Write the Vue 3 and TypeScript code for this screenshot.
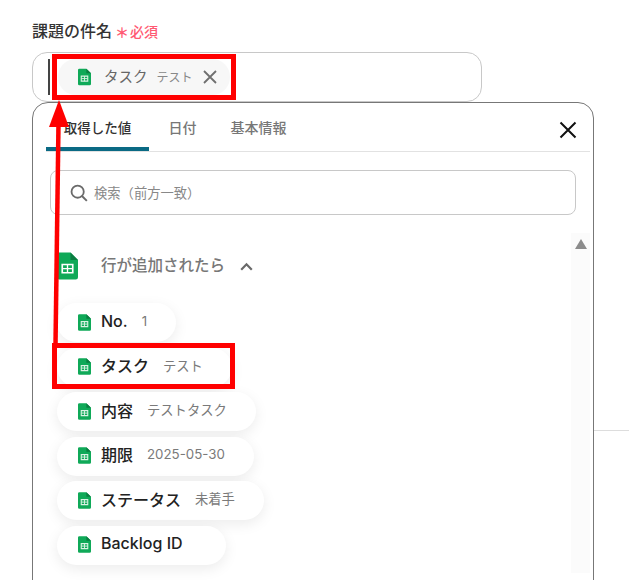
<script setup lang="ts">
interface Pill { name: string; value: string }
const pills: Pill[] = [
  { name: 'No.', value: '1' },
  { name: 'タスク', value: 'テスト' },
  { name: '内容', value: 'テストタスク' },
  { name: '期限', value: '2025-05-30' },
  { name: 'ステータス', value: '未着手' },
  { name: 'Backlog ID', value: '' },
]
const tabs = ['取得した値', '日付', '基本情報']
</script>

<template>
  <div class="page">
    <div class="rule"></div>
    <div class="label-row">
      <span class="label">課題の件名</span>
      <span class="req"><span class="star">＊</span>必須</span>
    </div>
    <div class="input">
      <span class="caret"></span>
      <div class="chip">
        <svg class="sheet" width="13" height="18" viewBox="0 0 14 18"><path d="M1.500 0H9l5 5v11.500a1.500 1.500 0 0 1-1.500 1.500h-11A1.500 1.500 0 0 1 0 16.500v-15A1.500 1.500 0 0 1 1.500 0z" fill="#0fa958"/><path d="M9 0l5 5H9z" fill="#0b7d41"/><path d="M3.500 8h7v5.500h-7z" fill="none" stroke="#d9f2e3" stroke-width="1.200"/><path d="M3.500 10.700h7M7 8v5.500" stroke="#d9f2e3" stroke-width="1"/></svg>
        <span class="chip-name">タスク</span>
        <span class="chip-value">テスト</span>
        <svg class="chip-x" width="14" height="14" viewBox="0 0 14 14"><path d="M1 1l12 12M13 1L1 13" stroke="#6f6f6f" stroke-width="1.800"/></svg>
      </div>
    </div>
    <div class="panel">
      <div class="tabs">
        <span v-for="(t, i) in tabs" :key="t" class="tab" :class="{ active: i === 0 }">{{ t }}</span>
        <svg class="close" width="18" height="18" viewBox="0 0 18 18"><path d="M1.500 1.500l15 15M16.500 1.500l-15 15" stroke="#111" stroke-width="2"/></svg>
      </div>
      <div class="search">
        <svg width="18" height="18" viewBox="0 0 20 20"><circle cx="8.500" cy="8.500" r="6.800" fill="none" stroke="#6a6a6a" stroke-width="2"/><path d="M13.300 13.300L18.700 18.700" stroke="#6a6a6a" stroke-width="2.200"/></svg>
        <span>検索（前方一致）</span>
      </div>
      <div class="scroll">
        <div class="scrollbar"><span class="thumb"></span></div>
        <div class="group">
          <svg class="sheet-lg" width="21" height="28" viewBox="0 0 14 18"><path d="M1.500 0H9l5 5v11.500a1.500 1.500 0 0 1-1.500 1.500h-11A1.500 1.500 0 0 1 0 16.500v-15A1.500 1.500 0 0 1 1.500 0z" fill="#0fa958"/><path d="M9 0l5 5H9z" fill="#0b7d41"/><path d="M3.500 8h7v5.500h-7z" fill="none" stroke="#fff" stroke-width="1.100"/><path d="M3.500 10.700h7M7 8v5.500" stroke="#fff" stroke-width=".9"/></svg>
          <span class="group-title">行が追加されたら</span>
          <svg width="13" height="9" viewBox="0 0 13 9"><path d="M1.200 7.800L6.500 2.300l5.300 5.500" fill="none" stroke="#6a6a6a" stroke-width="2.200"/></svg>
        </div>
        <div class="pills">
          <div v-for="p in pills" :key="p.name" class="pill">
            <svg class="pill-icon" width="13" height="17" viewBox="0 0 14 18"><path d="M1.500 0H9l5 5v11.500a1.500 1.500 0 0 1-1.500 1.500h-11A1.500 1.500 0 0 1 0 16.500v-15A1.500 1.500 0 0 1 1.500 0z" fill="#0fa958"/><path d="M9 0l5 5H9z" fill="#0b7d41"/><path d="M3.500 8h7v5.500h-7z" fill="none" stroke="#d9f2e3" stroke-width="1.200"/><path d="M3.500 10.700h7M7 8v5.500" stroke="#d9f2e3" stroke-width="1"/></svg>
            <span class="pill-name">{{ p.name }}</span>
            <span class="pill-value">{{ p.value }}</span>
          </div>
        </div>
      </div>
    </div>
    <div class="mark mark-top"></div>
    <div class="mark mark-row"></div>
    <svg class="arrow" width="30" height="260" viewBox="0 0 30 260"><path d="M10.500 247L13.500 25" stroke="#f00" stroke-width="4.500" fill="none"/><path d="M14 2L24 29H4z" fill="#f00"/></svg>
  </div>
</template>

<style>
html, body { margin: 0; background: #fff; }
</style>

<style scoped>
.page {
  position: relative;
  width: 629px;
  height: 580px;
  overflow: hidden;
  background: #fff;
  box-sizing: border-box;
  padding: 21px 0 0 32px;
  font-family: "Noto Sans CJK JP", "Noto Sans", sans-serif;
  color: #333;
}
.rule { position: absolute; left: 594px; right: 0; top: 430px; height: 1px; background: #ddd; }
.label-row { display: flex; align-items: center; height: 21px; gap: 3px; }
.label { font-size: 16px; font-weight: 500; color: #333; line-height: 20px; padding-bottom: 4px; }
.req { display: flex; align-items: center; font-size: 14px; color: #ff5a72; font-weight: 500; line-height: 20px; padding-bottom: 2px; }
.star { font-size: 14px; font-weight: 700; width: 14px; margin-right: 1px; padding-top: 2px; }
.input {
  display: flex;
  align-items: center;
  box-sizing: border-box;
  width: 450px;
  height: 50px;
  margin-top: 10px;
  padding-left: 15px;
  border: 1px solid #c8c8c8;
  border-radius: 15px;
}
.caret { width: 2px; height: 36px; background: #444; }
.chip {
  display: flex;
  align-items: center;
  height: 36px;
  margin-left: 8px;
  width: 172px;
  box-sizing: border-box;
  padding-left: 20px;
  border-radius: 18px;
  background: #f7f7f7;
}
.chip-name { margin-left: 13px; font-size: 14.500px; color: #666; padding-bottom: 3px; }
.chip-value { margin-left: 9px; font-size: 12px; color: #888; padding-bottom: 2px; }
.chip-x { margin-left: 10px; }
.panel {
  box-sizing: border-box;
  width: 562px;
  height: 500px;
  padding: 0 0 0 13px;
  border: 1px solid #777;
  border-radius: 16px 16px 0 0;
  background: #fff;
}
.tabs {
  position: relative;
  display: flex;
  box-sizing: border-box;
  height: 49px;
  width: 544px;
  border-bottom: 1px solid #e2e2e2;
  font-size: 14px;
  font-weight: 500;
}
.tab { box-sizing: border-box; display: flex; align-items: center; justify-content: center; color: #777; height: 48px; padding-bottom: 1px; }
.tab:nth-child(1) { width: 103px; }
.tab:nth-child(2) { width: 67px; }
.tab:nth-child(3) { width: 75px; margin-left: 5px; }
.tab.active { color: #333; font-size: 13.500px; border-bottom: 4px solid #0a6a84; padding-top: 5px; border-radius: 3px 3px 0 0; }
.close { position: absolute; right: 13px; top: 18px; }
.search {
  display: flex;
  align-items: center;
  box-sizing: border-box;
  width: 526px;
  height: 45px;
  margin: 18px 0 0 4px;
  padding-left: 19px;
  gap: 6px;
  border: 1px solid #c8c8c8;
  border-radius: 8px;
  font-size: 13.300px;
  color: #888;
}
.scroll { position: relative; height: 380px; display: flow-root; }
.scrollbar {
  position: absolute;
  left: 525px;
  top: 18px;
  width: 19px;
  height: 340px;
  background: #fbfbfb;
}
.thumb {
  display: block;
  margin: 6px auto 0;
  width: 0;
  height: 0;
  border-left: 6.500px solid transparent;
  border-right: 6.500px solid transparent;
  border-bottom: 10px solid #8c8c8c;
}
.group { display: flex; align-items: center; height: 28px; margin: 37px 0 0 11px; }
.sheet-lg { flex: none; }
.group-title { margin-left: 23px; margin-right: 15px; padding-bottom: 5px; font-size: 15.500px; font-weight: 500; color: #777; }
.pills { display: flex; flex-direction: column; align-items: flex-start; gap: 5.500px; margin: 23px 0 0 11px; }
.pill {
  display: flex;
  align-items: center;
  height: 39px;
  padding: 0 29px 0 21px;
  border-radius: 20px;
  background: #fff;
  box-shadow: 0 4px 14px rgba(0, 0, 0, 0.08);
}
.pill-icon { margin-top: -1px; }
.pill-name { margin-left: 10px; padding-bottom: 4px; font-family: Inter, "Noto Sans CJK JP", sans-serif; font-size: 16px; font-weight: 500; color: #222; }
.pill-value { margin-left: 14px; padding-bottom: 4px; font-family: Inter, "Noto Sans CJK JP", sans-serif; font-size: 13.300px; color: #7a7a7a; }
.mark { position: absolute; box-sizing: border-box; border: 5px solid #f00; }
.mark-top { left: 52px; top: 54px; width: 184px; height: 46px; }
.mark-row { left: 52px; top: 343px; width: 183px; height: 46px; }
.arrow { position: absolute; left: 45px; top: 98px; }
</style>
